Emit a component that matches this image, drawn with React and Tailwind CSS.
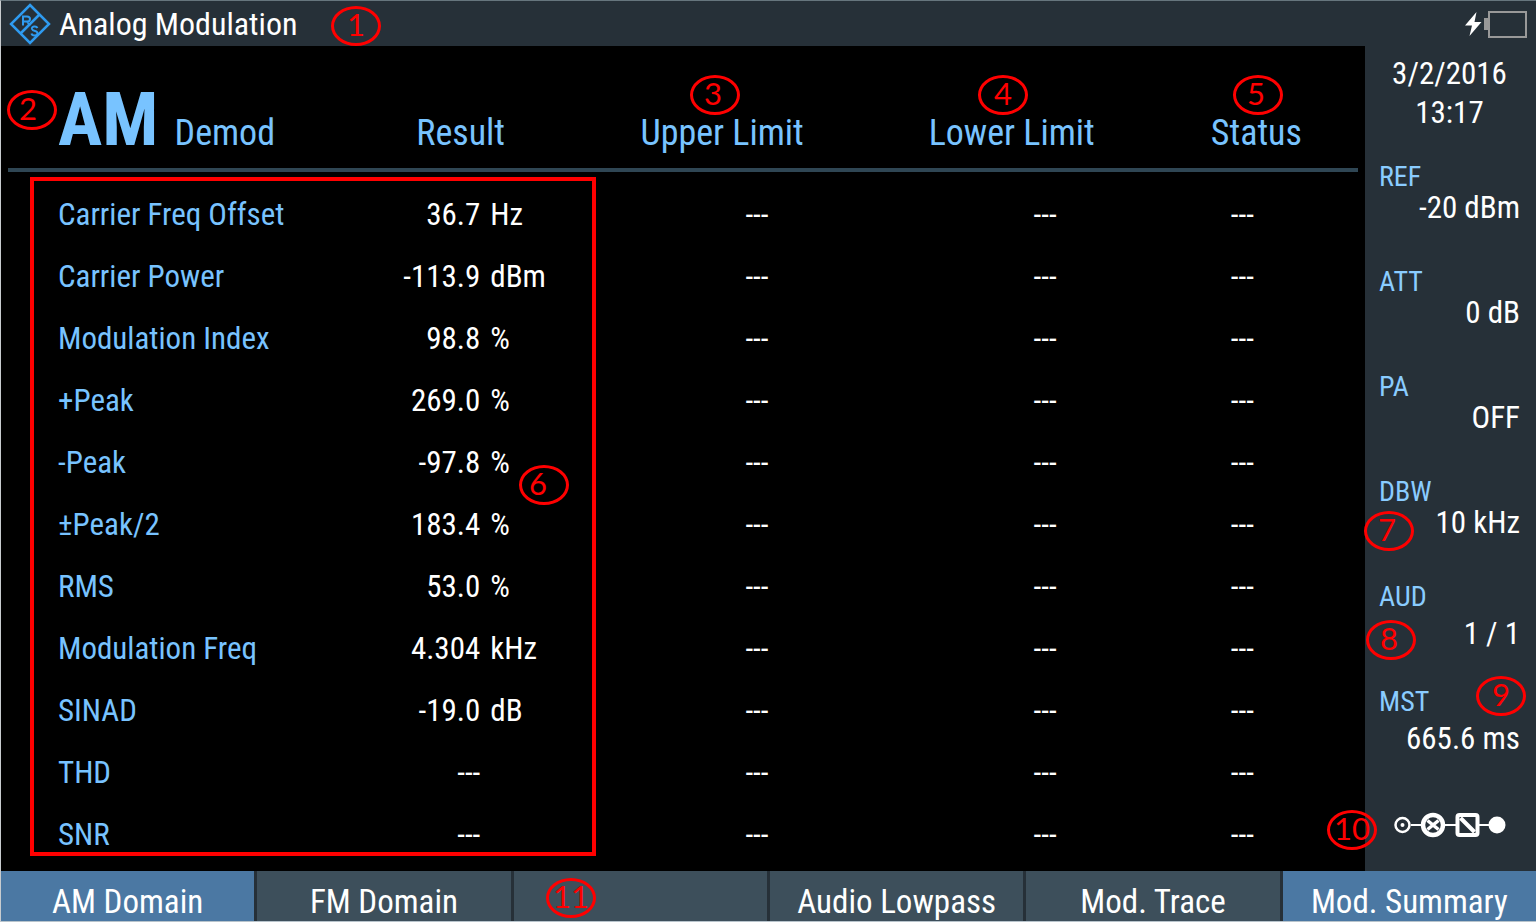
const rows = [
  ['Carrier Freq Offset', '36.7', 'Hz'],
  ['Carrier Power', '-113.9', 'dBm'],
  ['Modulation Index', '98.8', '%'],
  ['+Peak', '269.0', '%'],
  ['-Peak', '-97.8', '%'],
  ['±Peak/2', '183.4', '%'],
  ['RMS', '53.0', '%'],
  ['Modulation Freq', '4.304', 'kHz'],
  ['SINAD', '-19.0', 'dB'],
  ['THD', '---', ''],
  ['SNR', '---', ''],
];

const settings = [
  { label: 'REF', value: '-20 dBm' },
  { label: 'ATT', value: '0 dB' },
  { label: 'PA', value: 'OFF' },
  { label: 'DBW', value: '10 kHz' },
  { label: 'AUD', value: '1 / 1', loose: true },
  { label: 'MST', value: '665.6 ms', loose: true },
];

const tabs = [
  { label: 'AM Domain', active: true },
  { label: 'FM Domain' },
  { label: '' },
  { label: 'Audio Lowpass' },
  { label: 'Mod. Trace' },
  { label: 'Mod. Summary', active: true },
];

function Callout({ n, className }) {
  return (
    <span
      className={`absolute z-10 flex h-10 w-[50px] items-center justify-center rounded-[50%] border-3 border-[#ff0000] pb-1 font-[Lato,sans-serif] text-[31px] leading-6 text-[#ff0000] ${className}`}
    >
      {n}
    </span>
  );
}

function Logo() {
  return (
    <svg viewBox="0 0 42 42" className="h-[42px] w-[42px]" fill="none" stroke="#2f9bf0" aria-hidden="true">
      <path d="M21 2 40 21 21 40 2 21Z" strokeWidth="2.500" />
      <path d="M11.500 30.500 30.500 11.500" strokeWidth="2.500" />
      <path d="M14 22.500v-9h4q3 0 3 2.500t-3 2.500h-4m4 0 3 4" strokeWidth="2" />
      <path d="M28.500 25q-1-2-3.500-1.500-2.500.500-2 2.500.500 1.500 3 2t2.500 2.500-3 2q-2.500 0-3-2" strokeWidth="2" />
    </svg>
  );
}

function Battery() {
  return (
    <svg viewBox="0 0 64 30" className="h-[30px] w-16" aria-hidden="true">
      <path d="M12.500 3 1 16.500h7L5.500 27 17.500 13h-7Z" fill="#fff" />
      <path d="M20 9h5v12h-5z" fill="#999" />
      <rect x="25" y="3" width="37" height="25" fill="none" stroke="#999" strokeWidth="2" />
    </svg>
  );
}

function SignalPath() {
  return (
    <svg viewBox="0 0 112 26" className="h-[26px] w-28" fill="none" stroke="#fff" role="img" aria-label="Signal path">
      <path d="M17 13h12M51 13h12M85 13h11" strokeWidth="2" />
      <circle cx="8.500" cy="13" r="7" strokeWidth="2.500" />
      <circle cx="8.500" cy="13" r="2" fill="#fff" stroke="none" />
      <circle cx="39" cy="13" r="10" strokeWidth="4.500" />
      <path d="m33.500 8.500 11 9M44.500 8.500l-11 9" strokeWidth="3.500" />
      <rect x="63.500" y="3" width="20" height="20" rx="2" strokeWidth="4" />
      <path d="m66.500 6 14 14" strokeWidth="4" />
      <circle cx="103" cy="13" r="8.500" fill="#fff" stroke="none" />
    </svg>
  );
}

export default function App() {
  return (
    <div className="relative flex min-h-screen flex-col border-t border-b border-l border-t-[#66757d] border-b-[#b8c4cc] border-l-[#c8cccf] bg-black font-['Roboto_Condensed','Liberation_Sans_Narrow',sans-serif] text-white">
      <header className="relative flex h-[45px] items-center justify-between bg-[#263038] pr-2 pl-2">
        <div className="flex items-center gap-2">
          <Logo />
          <h1 className="text-[32px] leading-10">Analog Modulation</h1>
        </div>
        <Battery />
        <Callout n="1" className="top-[5px] left-[330px]" />
      </header>

      <div className="flex flex-1">
        <main className="relative min-w-0 flex-1 px-[7px]">
          <table className="w-full table-fixed border-collapse text-left text-[31px] leading-8">
            <colgroup>
              <col className="w-[392px]" />
              <col className="w-[240px]" />
              <col className="w-[288px]" />
              <col className="w-[282px]" />
              <col className="w-[147px]" />
            </colgroup>
            <thead>
              <tr className="h-[124px] border-b-4 border-[#2f4654] align-baseline text-[36px] whitespace-nowrap text-[#78c3ff]">
                <th className="pt-[34px] pl-[50px] font-normal" scope="col">
                  <span className="mr-2 text-[74px] leading-[80px] font-bold">AM</span>{' '}
                  Demod
                </th>
                <th className="pl-4 font-normal" scope="col">Result</th>
                <th className="font-normal" scope="col">Upper Limit</th>
                <th className="font-normal" scope="col">Lower Limit</th>
                <th className="font-normal" scope="col">Status</th>
              </tr>
            </thead>
            <tbody>
              <tr className="h-[14px]" aria-hidden="true" />
              {rows.map(([name, value, unit]) => (
                <tr key={name} className="h-[62px]">
                  <th className="pl-[50px] font-normal text-[#78c3ff]" scope="row">{name}</th>
                  <td>
                    <div className="flex gap-[10px]">
                      <span className="w-20 text-right">{value}</span>
                      <span>{unit}</span>
                    </div>
                  </td>
                  <td><div className="w-32 text-right">---</div></td>
                  <td><div className="w-32 text-right">---</div></td>
                  <td className="pl-5">---</td>
                </tr>
              ))}
            </tbody>
          </table>
          <div className="pointer-events-none absolute top-[131px] left-[29px] h-[679px] w-[566px] border-4 border-[#ff0000]" />
          <Callout n="2" className="top-11 left-[6px] pr-2" />
          <Callout n="3" className="top-[29px] left-[689px] pr-1" />
          <Callout n="4" className="top-[29px] left-[977px]" />
          <Callout n="5" className="top-[29px] left-[1232px] pr-1" />
          <Callout n="6" className="top-[419px] left-[518px] pr-3" />
          <Callout n="10" className="top-[764px] -right-3" />
        </main>

        <aside className="relative flex w-[171px] shrink-0 flex-col bg-[#263038] pr-4 pl-[14px] text-[31px]">
          <div className="h-[116px] pt-2 text-center leading-[39px]">
            <div>3/2/2016</div>
            <div>13:17</div>
          </div>
          <dl>
            {settings.map(({ label, value, loose }) => (
              <div key={label} className="h-[105px]">
                <dt className="text-[28px] leading-[30px] text-[#8accff]">{label}</dt>
                <dd className={loose ? 'text-right leading-[44px]' : 'text-right leading-8'}>{value}</dd>
              </div>
            ))}
          </dl>
          <div className="flex justify-center pt-5">
            <SignalPath />
          </div>
          <Callout n="7" className="top-[465px] -left-px pr-1" />
          <Callout n="8" className="top-[574px] left-px pr-1" />
          <Callout n="9" className="top-[630px] right-[10px]" />
        </aside>
      </div>

      <nav className="relative grid h-[50px] grid-cols-6 gap-[3px] bg-[#263038] text-[33px]">
        {tabs.map(({ label, active }, i) => (
          <button
            key={i}
            type="button"
            aria-label={label || 'Unassigned'}
            className={`pt-3 text-center leading-[38px] whitespace-nowrap ${active ? 'bg-[#4b78a3]' : 'bg-[#3d4f5b]'}`}
          >
            {label}
          </button>
        ))}
        <Callout n="11" className="top-[7px] left-[545px]" />
      </nav>
    </div>
  );
}
